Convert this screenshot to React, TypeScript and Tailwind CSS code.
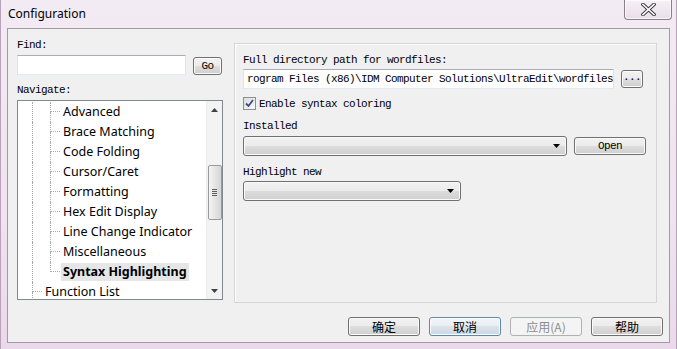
import React from 'react';

const mono = "font-['Liberation_Mono',monospace] text-[11px] tracking-[-0.6px] leading-[12px] text-black";
const ui = "font-['Noto_Sans','Open_Sans',sans-serif]";
const cjk = "font-['Noto_Sans_CJK_SC',sans-serif]";

const btn =
  'flex items-center justify-center rounded-[3px] border border-[#707070] bg-[linear-gradient(#f2f2f2,#ebebeb_50%,#dddddd_50%,#cfcfcf)] shadow-[inset_0_0_0_1px_#fbfbfb]';

function ComboArrow() {
  return (
    <svg width="8" height="5" viewBox="0 0 8 5">
      <path d="M0 0h7L3.5 4z" fill="#000" />
    </svg>
  );
}

function Combo({ width }: { width: string }) {
  return (
    <div className={`${btn} ${width} h-[20px] justify-end pr-[5px]`}>
      <ComboArrow />
    </div>
  );
}

function TreeRow({ label, child, last, selected }: { label: string; child?: boolean; last?: boolean; selected?: boolean }) {
  return (
    <div className="flex h-5 shrink-0">
      <div className="w-[14px]" />
      {child ? (
        <>
          <div className="w-[18px] border-l border-dotted border-[#a8a8a8]" />
          <div className="flex w-[10px] flex-col">
            <div className="h-[10px] border-b border-l border-dotted border-[#a8a8a8]" />
            <div className={`flex-1 ${last ? '' : 'border-l border-dotted border-[#a8a8a8]'}`} />
          </div>
        </>
      ) : (
        <div className="flex w-[10px] flex-col">
          <div className="h-[10px] border-b border-l border-dotted border-[#a8a8a8]" />
          <div className="flex-1 border-l border-dotted border-[#a8a8a8]" />
        </div>
      )}
      <div className="flex items-center pl-px">
        <span
          className={`${ui} px-[2px] text-[12.5px] leading-[18px] text-black ${selected ? 'bg-[#e6e6e6] font-bold' : ''}`}
        >
          {label}
        </span>
      </div>
    </div>
  );
}

function Tree() {
  const items = [
    'Advanced',
    'Brace Matching',
    'Code Folding',
    'Cursor/Caret',
    'Formatting',
    'Hex Edit Display',
    'Line Change Indicator',
    'Miscellaneous',
  ];
  return (
    <div className="mt-[4px] flex h-[200px] w-[206px] border border-[#828790] bg-white">
      <div className="flex flex-1 flex-col overflow-hidden pt-px">
        {items.map((t) => (
          <TreeRow key={t} label={t} child />
        ))}
        <TreeRow label="Syntax Highlighting" child last selected />
        <TreeRow label="Function List" />
      </div>
      <div className="flex w-[16px] flex-col items-center bg-[#f3f3f3] border-l border-[#ececec]">
        <div className="flex h-[17px] items-center justify-center">
          <svg width="7" height="4" viewBox="0 0 7 4">
            <path d="M3.5 0L7 4H0z" fill="#404040" />
          </svg>
        </div>
        <div className="mt-[47px] flex h-[55px] w-[14px] flex-col items-center justify-center gap-[1px] rounded-[2px] border border-[#9a9a9a] bg-[linear-gradient(90deg,#f4f4f4,#e4e4e4_50%,#d6d6d6)]">
          <div className="h-px w-[5px] bg-[#606060]" />
          <div className="h-px w-[5px] bg-[#606060]" />
          <div className="h-px w-[5px] bg-[#606060]" />
          <div className="h-px w-[5px] bg-[#606060]" />
        </div>
        <div className="flex-1" />
        <div className="flex h-[17px] items-center justify-center">
          <svg width="7" height="4" viewBox="0 0 7 4">
            <path d="M0 0h7L3.5 4z" fill="#404040" />
          </svg>
        </div>
      </div>
    </div>
  );
}

function CloseGlyph() {
  return (
    <svg width="15" height="13" viewBox="0 0 15 13">
      <path d="M2 1.5L13 11.5M13 1.5L2 11.5" stroke="#3a3a3a" strokeWidth="3.6" strokeLinecap="square" />
      <path d="M2 1.5L13 11.5M13 1.5L2 11.5" stroke="#ffffff" strokeWidth="1.6" strokeLinecap="square" />
    </svg>
  );
}

export default function App() {
  return (
    <div className="flex h-[349px] w-[677px] flex-col overflow-hidden border-x border-[#b8a2b8] bg-[linear-gradient(180deg,#f3ebf3,#efe4ef_60%,#ead9ea)]">
      <div className="flex h-[28px] shrink-0 items-start">
        <div className={`${ui} pl-[7px] pt-[6px] text-[12px] leading-[16px] text-black`}>Configuration</div>
        <div className="flex-1" />
        <div className="mr-[4px] flex h-[20px] w-[48px] items-center justify-center rounded-b-[4px] border border-t-0 border-[#8a7f8a] bg-[linear-gradient(#f6f0f6,#e9dfe9)] shadow-[inset_0_0_0_1px_#ffffffaa]">
          <CloseGlyph />
        </div>
      </div>

      <div className="mx-[6px] mb-[6px] flex h-[315px] flex-col border border-[#a39aa3] bg-[#f0f0f0]">
        <div className="flex items-start pl-[9px]">
          <div className="mt-[10px] flex w-[206px] flex-col">
            <div className={`${mono} h-[12px]`}>Find:</div>
            <div className="mt-[4px] flex items-start">
              <div className="h-[20px] w-[169px] border border-[#abadb3] border-x-[#e2e3ea] border-b-[#e3e9ef] bg-white" />
              <div className={`${btn} ml-[7px] mt-[2px] h-[18px] w-[29px]`}>
                <span className={mono}>Go</span>
              </div>
            </div>
            <div className={`${mono} mt-[9px] h-[12px]`}>Navigate:</div>
            <Tree />
          </div>

          <div className="ml-[11px] mt-[14px] flex h-[260px] w-[423px] flex-col border border-[#d5d5d5] pl-[8px] shadow-[inset_1px_1px_0_#ffffff]">
            <div className={`${mono} mt-[10px] h-[12px]`}>Full directory path for wordfiles:</div>
            <div className="mt-[3px] flex items-center">
              <div className="flex h-[20px] w-[371px] items-center overflow-hidden border border-[#abadb3] border-x-[#e2e3ea] border-b-[#e3e9ef] bg-white pl-[3px]">
                <span className={`${mono} whitespace-nowrap`}>rogram Files (x86)\IDM Computer Solutions\UltraEdit\wordfiles</span>
              </div>
              <div className={`${btn} ml-[7px] h-[18px] w-[22px] items-end pb-[4px]`}>
                <span className={`${mono} leading-[8px]`}>...</span>
              </div>
            </div>
            <div className="mt-[8px] flex items-center">
              <div className="flex h-[13px] w-[13px] items-center justify-center border border-[#8e8f8f] bg-[linear-gradient(135deg,#dcdcdc,#fafafa)]">
                <svg width="9" height="9" viewBox="0 0 9 9">
                  <path d="M1 4.5L3.5 7L8 1" fill="none" stroke="#3b4f83" strokeWidth="1.8" />
                </svg>
              </div>
              <span className={`${mono} ml-[3px]`}>Enable syntax coloring</span>
            </div>
            <div className={`${mono} mt-[10px] h-[12px]`}>Installed</div>
            <div className="mt-[4px] flex items-center">
              <Combo width="w-[324px]" />
              <div className={`${btn} ml-[7px] h-[18px] w-[72px]`}>
                <span className={mono}>Open</span>
              </div>
            </div>
            <div className={`${mono} mt-[10px] h-[12px]`}>Highlight new</div>
            <div className="mt-[3px] flex">
              <Combo width="w-[218px]" />
            </div>
          </div>
        </div>

        <div className={`${cjk} mt-[14px] flex justify-end gap-[9px] pr-[6px] text-[12px] leading-[14px]`}>
          <div className={`${btn} h-[19px] w-[72px]`}>确定</div>
          <div className="flex h-[19px] w-[72px] items-center justify-center rounded-[3px] border border-[#5b87b0] bg-[linear-gradient(#f1f5f9,#e7edf3_50%,#dae2ea_50%,#cfd8e1)] shadow-[inset_0_0_0_1px_#fbfdff]">
            取消
          </div>
          <div className="flex h-[19px] w-[72px] items-center justify-center rounded-[3px] border border-[#adb2b5] bg-[#f4f4f4] text-[#8c8c8c]">
            应用(A)
          </div>
          <div className={`${btn} h-[19px] w-[72px]`}>帮助</div>
        </div>
      </div>
    </div>
  );
}
